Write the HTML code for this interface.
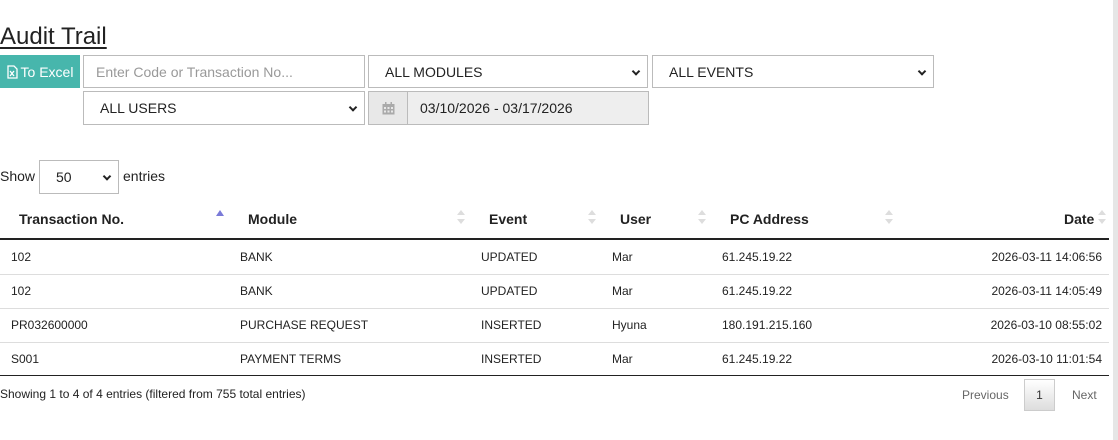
<!DOCTYPE html>
<html><head><style>
*{box-sizing:border-box;margin:0;padding:0}
body{width:1118px;height:440px;background:#fff;font-family:"Liberation Sans",Arial,sans-serif;color:#333;position:relative;overflow:hidden}
.a{position:absolute}
.box{position:absolute;border:1px solid #bbb;background:#fff;font-size:14px;display:flex;align-items:center;padding-left:16px;color:#222}
.chev{position:absolute;right:8px;top:50%;transform:translateY(-60%) rotate(45deg);width:6px;height:6px;border-right:2px solid #222;border-bottom:2px solid #222}
.th{position:absolute;top:211px;font-weight:bold;font-size:14px;color:#222}
.td{position:absolute;font-size:12px;color:#222}
.s{position:absolute;top:210px;width:8px;font-size:0}
.s:before{content:"";position:absolute;left:0;top:0;border-left:4px solid transparent;border-right:4px solid transparent;border-bottom:5px solid #ddd}
.s:after{content:"";position:absolute;left:0;top:9px;border-left:4px solid transparent;border-right:4px solid transparent;border-top:5px solid #ddd}
.hl{position:absolute;left:0;width:1109px;height:1px;background:#ddd}
</style></head><body>
<div class="a" style="left:0;top:23px;font-size:24px;color:#222;text-decoration:underline;text-underline-offset:3px">Audit Trail</div>
<div class="a" style="left:0;top:55px;width:80px;height:33px;background:#47b6ac;color:#fff;font-size:14px;display:flex;align-items:center;justify-content:center;gap:3px">
<svg width="11" height="14" viewBox="0 0 11 14"><path d="M1 1h6l3 3v9H1z" fill="none" stroke="#fff" stroke-width="1.3"/><path d="M3 6l4 5M7 6l-4 5" stroke="#fff" stroke-width="1.3"/></svg>To Excel</div>
<div class="box" style="left:83px;top:55px;width:282px;height:33px;color:#999;padding-left:12px">Enter Code or Transaction No...</div>
<div class="box" style="left:368px;top:55px;width:280px;height:33px">ALL MODULES<span class="chev"></span></div>
<div class="box" style="left:652px;top:55px;width:282px;height:33px">ALL EVENTS<span class="chev"></span></div>
<div class="box" style="left:83px;top:91px;width:282px;height:34px">ALL USERS<span class="chev"></span></div>
<div class="box" style="left:368px;top:91px;width:281px;height:34px;padding-left:0">
<div style="width:39px;height:100%;background:#e8e8e8;border-right:1px solid #bbb;display:flex;align-items:center;justify-content:center">
<svg width="13" height="13" viewBox="0 0 13 13"><rect x="0.5" y="2" width="12" height="10.5" fill="#aaa"/><g fill="#e8e8e8"><rect x="2" y="5" width="2" height="2"/><rect x="5.5" y="5" width="2" height="2"/><rect x="9" y="5" width="2" height="2"/><rect x="2" y="8.5" width="2" height="2"/><rect x="5.5" y="8.5" width="2" height="2"/><rect x="9" y="8.5" width="2" height="2"/></g><rect x="3" y="0" width="1.5" height="3" fill="#aaa"/><rect x="8.5" y="0" width="1.5" height="3" fill="#aaa"/></svg></div>
<div style="flex:1;height:100%;background:#eee;display:flex;align-items:center;padding-left:12px">03/10/2026 - 03/17/2026</div></div>
<div class="a" style="left:0;top:168px;font-size:14px;color:#222">Show</div>
<div class="box" style="left:39px;top:160px;width:80px;height:34px">50<span class="chev"></span></div>
<div class="a" style="left:123px;top:168px;font-size:14px;color:#222">entries</div>
<div class="th" style="left:19px">Transaction No.</div>
<div class="a" style="left:216px;top:210px;border-left:4px solid transparent;border-right:4px solid transparent;border-bottom:6px solid #7a7ad8"></div>
<div class="th" style="left:248px">Module</div><div class="s" style="left:457px"></div>
<div class="th" style="left:489px">Event</div><div class="s" style="left:588px"></div>
<div class="th" style="left:620px">User</div><div class="s" style="left:698px"></div>
<div class="th" style="left:730px">PC Address</div><div class="s" style="left:885px"></div>
<div class="th" style="left:1064px">Date</div><div class="s" style="left:1098px"></div>
<div class="a" style="left:0;top:238px;width:1109px;height:2px;background:#222"></div>
<div class="hl" style="top:274px"></div><div class="hl" style="top:308px"></div><div class="hl" style="top:342px"></div>
<div class="a" style="left:0;top:375px;width:1109px;height:1px;background:#222"></div>
<div class="td" style="left:11px;top:250px">102</div><div class="td" style="left:240px;top:250px">BANK</div><div class="td" style="left:481px;top:250px">UPDATED</div><div class="td" style="left:612px;top:250px">Mar</div><div class="td" style="left:722px;top:250px">61.245.19.22</div><div class="td" style="right:16px;top:250px">2026-03-11 14:06:56</div>
<div class="td" style="left:11px;top:284px">102</div><div class="td" style="left:240px;top:284px">BANK</div><div class="td" style="left:481px;top:284px">UPDATED</div><div class="td" style="left:612px;top:284px">Mar</div><div class="td" style="left:722px;top:284px">61.245.19.22</div><div class="td" style="right:16px;top:284px">2026-03-11 14:05:49</div>
<div class="td" style="left:11px;top:318px">PR032600000</div><div class="td" style="left:240px;top:318px">PURCHASE REQUEST</div><div class="td" style="left:481px;top:318px">INSERTED</div><div class="td" style="left:612px;top:318px">Hyuna</div><div class="td" style="left:722px;top:318px">180.191.215.160</div><div class="td" style="right:16px;top:318px">2026-03-10 08:55:02</div>
<div class="td" style="left:11px;top:352px">S001</div><div class="td" style="left:240px;top:352px">PAYMENT TERMS</div><div class="td" style="left:481px;top:352px">INSERTED</div><div class="td" style="left:612px;top:352px">Mar</div><div class="td" style="left:722px;top:352px">61.245.19.22</div><div class="td" style="right:16px;top:352px">2026-03-10 11:01:54</div>
<div class="td" style="left:0;top:387px">Showing 1 to 4 of 4 entries (filtered from 755 total entries)</div>
<div class="td" style="left:962px;top:388px;color:#666">Previous</div>
<div class="a" style="left:1024px;top:379px;width:31px;height:32px;border:1px solid #ccc;background:linear-gradient(#fff,#ddd);font-size:12px;display:flex;align-items:center;justify-content:center;color:#333">1</div>
<div class="td" style="left:1072px;top:388px;color:#666">Next</div>
<div class="a" style="left:1113px;top:0;width:5px;height:440px;background:#e6e6e6"></div>
</body></html>
